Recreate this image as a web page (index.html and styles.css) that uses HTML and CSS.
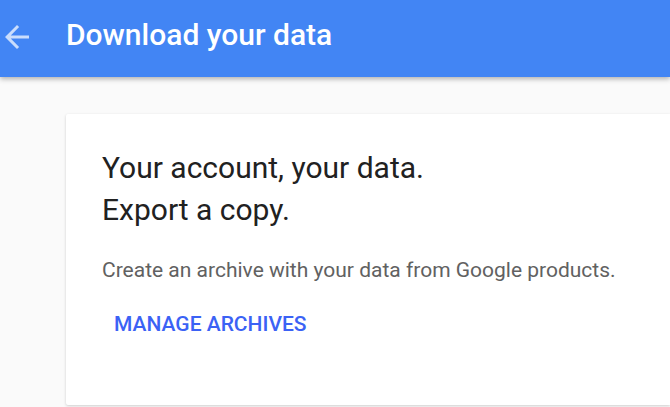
FILE: index.html
```html
<!DOCTYPE html>
<html>
<head>
<meta charset="utf-8">
<link rel="stylesheet" href="styles.css">
</head>
<body>
<header class="toolbar">
  <span class="back">
    <svg width="36" height="36" viewBox="0 0 24 24"><path d="M20 11H7.83l5.59-5.59L12 4l-8 8 8 8 1.41-1.41L7.83 13H20v-2z" fill="currentColor"/></svg>
  </span>
  <h1 class="title">Download your data</h1>
</header>
<main class="content">
  <section class="card">
    <h2 class="heading">Your account, your data.<br>Export a copy.</h2>
    <p class="desc">Create an archive with your data from Google products.</p>
    <a class="button">MANAGE ARCHIVES</a>
  </section>
</main>
</body>
</html>
```

FILE: styles.css
```css
html, body {
  margin: 0;
  padding: 0;
  background: #fafafa;
  font-family: Roboto, "Liberation Sans", sans-serif;
  overflow: hidden;
  height: 407px;
}
.toolbar {
  height: 77px;
  background: #4285f4;
  display: flex;
  align-items: center;
  box-shadow: 0 2px 5px rgba(0,0,0,0.3);
  position: relative;
  z-index: 1;
}
.back {
  width: 36px;
  height: 36px;
  margin-left: -1px;
  color: rgba(255,255,255,0.72);
  display: flex;
  position: relative;
  top: -2px;
}
.back svg {
  width: 36px;
  height: 36px;
}
.title {
  margin: 0 0 0 31px;
  font-size: 30px;
  font-weight: 500;
  color: #fff;
  position: relative;
  top: -4px;
}
.content {
  padding: 37px 0 0 66px;
}
.card {
  width: 604px;
  height: 291px;
  box-sizing: border-box;
  background: #fff;
  border-radius: 2px 0 0 2px;
  box-shadow: 0 1px 3px rgba(0,0,0,0.18);
  padding: 33px 36px 0;
}
.heading {
  margin: 0;
  font-size: 30px;
  font-weight: 400;
  line-height: 42px;
  color: #212121;
}
.desc {
  margin: 27px 0 0;
  font-size: 21px;
  color: #616161;
  white-space: nowrap;
}
.button {
  display: inline-block;
  margin: 30px 0 0 12px;
  font-size: 21px;
  font-weight: 500;
  color: #3b62f5;
}
```
